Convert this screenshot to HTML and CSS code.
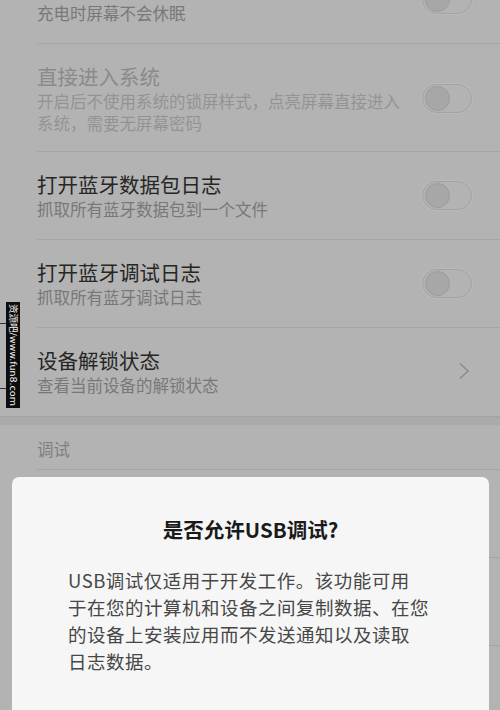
FILE: index.html
```html
<!DOCTYPE html>
<html lang="zh-CN">
<head>
<meta charset="utf-8">
<title>开发者选项</title>
<link rel="stylesheet" href="styles.css">
</head>
<body>
<div class="screen">
  <div class="list">
    <div class="row row-first">
      <div class="text">
        <div class="title">保持唤醒状态</div>
        <div class="sub">充电时屏幕不会休眠</div>
      </div>
      <div class="toggle"><span class="knob"></span></div>
    </div>
    <div class="row row-tall disabled">
      <div class="text">
        <div class="title">直接进入系统</div>
        <div class="sub">开启后不使用系统的锁屏样式，点亮屏幕直接进入<br>系统，需要无屏幕密码</div>
      </div>
      <div class="toggle"><span class="knob"></span></div>
    </div>
    <div class="row">
      <div class="text">
        <div class="title">打开蓝牙数据包日志</div>
        <div class="sub">抓取所有蓝牙数据包到一个文件</div>
      </div>
      <div class="toggle"><span class="knob"></span></div>
    </div>
    <div class="row">
      <div class="text">
        <div class="title">打开蓝牙调试日志</div>
        <div class="sub">抓取所有蓝牙调试日志</div>
      </div>
      <div class="toggle"><span class="knob"></span></div>
    </div>
    <div class="row row-last">
      <div class="text">
        <div class="title">设备解锁状态</div>
        <div class="sub">查看当前设备的解锁状态</div>
      </div>
      <svg class="chevron" width="12" height="18" viewBox="0 0 12 18"><path d="M2 1.5 L10 9 L2 16.5" fill="none" stroke="#8a8a8a" stroke-width="1.4"/></svg>
    </div>
  </div>
  <div class="band"></div>
  <div class="section">调试</div>
  <div class="list">
    <div class="row">
      <div class="text">
        <div class="title">USB调试</div>
        <div class="sub">连接USB后启用调试模式</div>
      </div>
      <div class="toggle"><span class="knob"></span></div>
    </div>
    <div class="row">
      <div class="text">
        <div class="title">撤销USB调试授权</div>
        <div class="sub">清除所有计算机的授权</div>
      </div>
    </div>
  </div>

  <div class="watermark">
    <span class="wm-line wm-top"></span>
    <span class="wm-line wm-bottom"></span>
    <span class="wm-text">资源吧/www.fun8.com</span>
  </div>

  <div class="dialog">
    <div class="dialog-title">是否允许USB调试?</div>
    <div class="dialog-body">USB调试仅适用于开发工作。该功能可用<br>于在您的计算机和设备之间复制数据、在您<br>的设备上安装应用而不发送通知以及读取<br>日志数据。</div>
  </div>
</div>
</body>
</html>
```

FILE: styles.css
```css
html, body {
  margin: 0;
  padding: 0;
}
body {
  background: #b3b3b3;
  font-family: "Noto Sans CJK SC", "Noto Sans", sans-serif;
  width: 500px;
  height: 710px;
  overflow: hidden;
}
.screen {
  position: relative;
  width: 500px;
  height: 710px;
  overflow: hidden;
}
.list {
  display: flex;
  flex-direction: column;
}
.row {
  margin-left: 37px;
  padding: 18px 28px 19px 0;
  display: flex;
  align-items: center;
  justify-content: space-between;
  border-bottom: 1px solid #a5a5a5;
}
.row-first {
  margin-top: -44px;
}
.row-tall {
  padding-bottom: 17px;
}
.row-last {
  border-bottom: none;
  padding-bottom: 20px;
}
.title {
  font-size: 20.5px;
  line-height: 28px;
  color: #262626;
  white-space: nowrap;
}
.sub {
  font-size: 16.5px;
  line-height: 22px;
  color: #787878;
  white-space: nowrap;
}
.disabled .title {
  color: #8a8a8a;
}
.disabled .sub {
  color: #939393;
}
.toggle {
  width: 48px;
  height: 27px;
  border: 1.5px solid #a3a3a3;
  border-radius: 16px;
  position: relative;
  flex: none;
  box-shadow: 0 0 0 1px #b9b9b9;
}
.knob {
  position: absolute;
  left: 1.5px;
  top: 1.5px;
  width: 23px;
  height: 23px;
  border-radius: 50%;
  background: #a7a7a7;
  border: 1px solid #9c9c9c;
}
.chevron {
  flex: none;
  margin-right: 2px;
}
.band {
  height: 8px;
  background: #aaaaaa;
  border-top: 1px solid #a3a3a3;
}
.section {
  margin-left: 37px;
  padding: 13px 0 9px;
  font-size: 16.5px;
  line-height: 22px;
  color: #808080;
  border-bottom: 1px solid #a5a5a5;
}
.watermark {
  position: absolute;
  left: 0;
  top: 302px;
  width: 22px;
  height: 106px;
}
.wm-line {
  position: absolute;
  left: 0;
  width: 7px;
  height: 1px;
  background: #333;
}
.wm-top { top: 21px; }
.wm-bottom { top: 86px; }
.wm-text {
  position: absolute;
  left: 6px;
  top: 0;
  width: 14px;
  height: 106px;
  background: #0d0d0d;
  color: #f2f2f2;
  font-family: "DejaVu Sans", "Noto Sans CJK SC", sans-serif;
  font-size: 9.5px;
  line-height: 14px;
  writing-mode: vertical-rl;
  text-orientation: sideways;
  text-align: center;
  white-space: nowrap;
}
.dialog {
  position: absolute;
  left: 12px;
  top: 477px;
  width: 477px;
  height: 260px;
  background: #f6f6f6;
  border-radius: 7px;
  box-sizing: border-box;
  padding: 37px 0 0 56px;
}
.dialog-title {
  margin-left: -56px;
  text-align: center;
  font-size: 20.5px;
  line-height: 30px;
  font-weight: 700;
  color: #1a1a1a;
}
.dialog-body {
  margin-top: 23px;
  font-size: 18.5px;
  letter-spacing: 0.5px;
  line-height: 27px;
  color: #474747;
  white-space: nowrap;
}
```
